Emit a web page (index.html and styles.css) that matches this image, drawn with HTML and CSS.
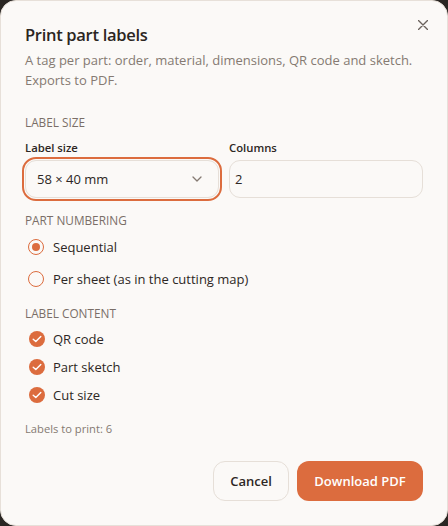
FILE: index.html
```html
<!DOCTYPE html>
<html lang="en">
<head>
<meta charset="utf-8">
<title>Print part labels</title>
<link rel="stylesheet" href="styles.css">
</head>
<body>
<div class="dialog">
  <button class="close" aria-label="Close">
    <svg width="10" height="10" viewBox="0 0 10 10"><path d="M0.5 0.5L9.5 9.5M9.5 0.5L0.5 9.5" stroke="#6b625c" stroke-width="1.4" fill="none" stroke-linecap="round"/></svg>
  </button>
  <h1 class="title">Print part labels</h1>
  <p class="desc">A tag per part: order, material, dimensions, QR code and sketch. Exports to PDF.</p>

  <div class="section">Label size</div>
  <div class="fields">
    <div class="field">
      <div class="field-label">Label size</div>
      <div class="select">
        <span>58 × 40 mm</span>
        <svg width="10" height="6" viewBox="0 0 10 6"><path d="M1 1L5 5L9 1" stroke="#857a72" stroke-width="1.3" fill="none" stroke-linecap="round" stroke-linejoin="round"/></svg>
      </div>
    </div>
    <div class="field">
      <div class="field-label">Columns</div>
      <div class="input">2</div>
    </div>
  </div>

  <div class="section section-gap">Part numbering</div>
  <div class="radios">
    <div class="row radio-row"><span class="radio on"></span>Sequential</div>
    <div class="row radio-row"><span class="radio"></span>Per sheet (as in the cutting map)</div>
  </div>

  <div class="section section-gap2">Label content</div>
  <div class="checks">
    <div class="row check-row"><span class="check"><svg width="10" height="8" viewBox="0 0 10 8"><path d="M1.2 4.2L3.8 6.6L8.8 1.4" stroke="#fff" stroke-width="1.4" fill="none" stroke-linecap="round" stroke-linejoin="round"/></svg></span>QR code</div>
    <div class="row check-row"><span class="check"><svg width="10" height="8" viewBox="0 0 10 8"><path d="M1.2 4.2L3.8 6.6L8.8 1.4" stroke="#fff" stroke-width="1.4" fill="none" stroke-linecap="round" stroke-linejoin="round"/></svg></span>Part sketch</div>
    <div class="row check-row"><span class="check"><svg width="10" height="8" viewBox="0 0 10 8"><path d="M1.2 4.2L3.8 6.6L8.8 1.4" stroke="#fff" stroke-width="1.4" fill="none" stroke-linecap="round" stroke-linejoin="round"/></svg></span>Cut size</div>
  </div>

  <div class="count">Labels to print: 6</div>

  <div class="actions">
    <button class="btn cancel">Cancel</button>
    <button class="btn primary">Download PDF</button>
  </div>
</div>
</body>
</html>
```
FILE: styles.css
```css
* { box-sizing: border-box; }
html, body { margin: 0; padding: 0; }
body {
  background: #2a2623;
  width: 448px;
  height: 526px;
  overflow: hidden;
  font-family: "Open Sans", "Noto Sans", sans-serif;
  color: #2d2724;
}
.dialog {
  position: relative;
  width: 448px;
  height: 526px;
  background: #fbf9f7;
  border: 1px solid #e7e0d9;
  border-radius: 16px;
  padding: 22px 24px 24px 24px;
  display: flex;
  flex-direction: column;
}
.close {
  position: absolute;
  top: 14px;
  right: 14px;
  width: 20px;
  height: 20px;
  border: 0;
  background: none;
  padding: 0;
  display: flex;
  align-items: center;
  justify-content: center;
}
.title {
  margin: 0;
  font-size: 16.5px;
  letter-spacing: -0.3px;
  line-height: 24px;
  font-weight: 600;
  color: #2b2522;
}
.desc {
  margin: 3px 0 0 0;
  font-size: 13px;
  line-height: 20px;
  color: #857a72;
}
.section {
  margin-top: 24px;
  font-size: 11.8px;
  line-height: 16px;
  font-weight: 500;
  text-transform: uppercase;
  color: #7a6e67;
}
.section-gap { margin-top: 14px; }
.section-gap2 { margin-top: 10px; }
.fields {
  display: grid;
  grid-template-columns: 1fr 1fr;
  column-gap: 10px;
  margin-top: 9px;
}
.field-label {
  font-size: 11.3px;
  line-height: 18px;
  font-weight: 600;
  color: #2d2724;
  margin-bottom: 3px;
}
.select, .input {
  height: 38px;
  border: 1px solid #e6dfd8;
  border-radius: 11px;
  background: #fbf9f7;
  font-size: 13px;
  display: flex;
  align-items: center;
  color: #2d2724;
}
.select {
  justify-content: space-between;
  padding: 0 16px 0 11px;
  outline: 2px solid #dc6c3e;
  outline-offset: 1px;
}
.input {
  padding: 0 0 0 5px;
}
.radios { margin-top: 3px; }
.row {
  display: flex;
  align-items: center;
  font-size: 13px;
  color: #2d2724;
}
.radio-row { height: 32px; }
.radio {
  width: 16px;
  height: 16px;
  border-radius: 50%;
  border: 1.5px solid #dc6c3e;
  margin: 0 9px 0 3px;
  display: flex;
  align-items: center;
  justify-content: center;
  flex: none;
}
.radio.on::after {
  content: "";
  width: 8px;
  height: 8px;
  border-radius: 50%;
  background: #dc6c3e;
}
.checks { margin-top: 4px; }
.check-row { height: 28px; }
.check {
  width: 16px;
  height: 16px;
  border-radius: 50%;
  background: #dc6c3e;
  margin: 0 8px 0 4px;
  display: flex;
  align-items: center;
  justify-content: center;
  flex: none;
}
.count {
  margin-top: 12px;
  font-size: 11.2px;
  line-height: 16px;
  color: #857a72;
}
.actions {
  margin-top: 24px;
  display: flex;
  justify-content: flex-end;
  gap: 8px;
}
.btn {
  height: 40px;
  border-radius: 12px;
  font-family: inherit;
  font-size: 13px;
  font-weight: 600;
  padding: 0;
  white-space: nowrap;
}
.cancel {
  width: 76px;
  background: #fbf9f7;
  border: 1px solid #e6dfd8;
  color: #2d2724;
}
.primary {
  width: 126px;
  background: #dc6c3e;
  border: 0;
  color: #fff;
}
```
